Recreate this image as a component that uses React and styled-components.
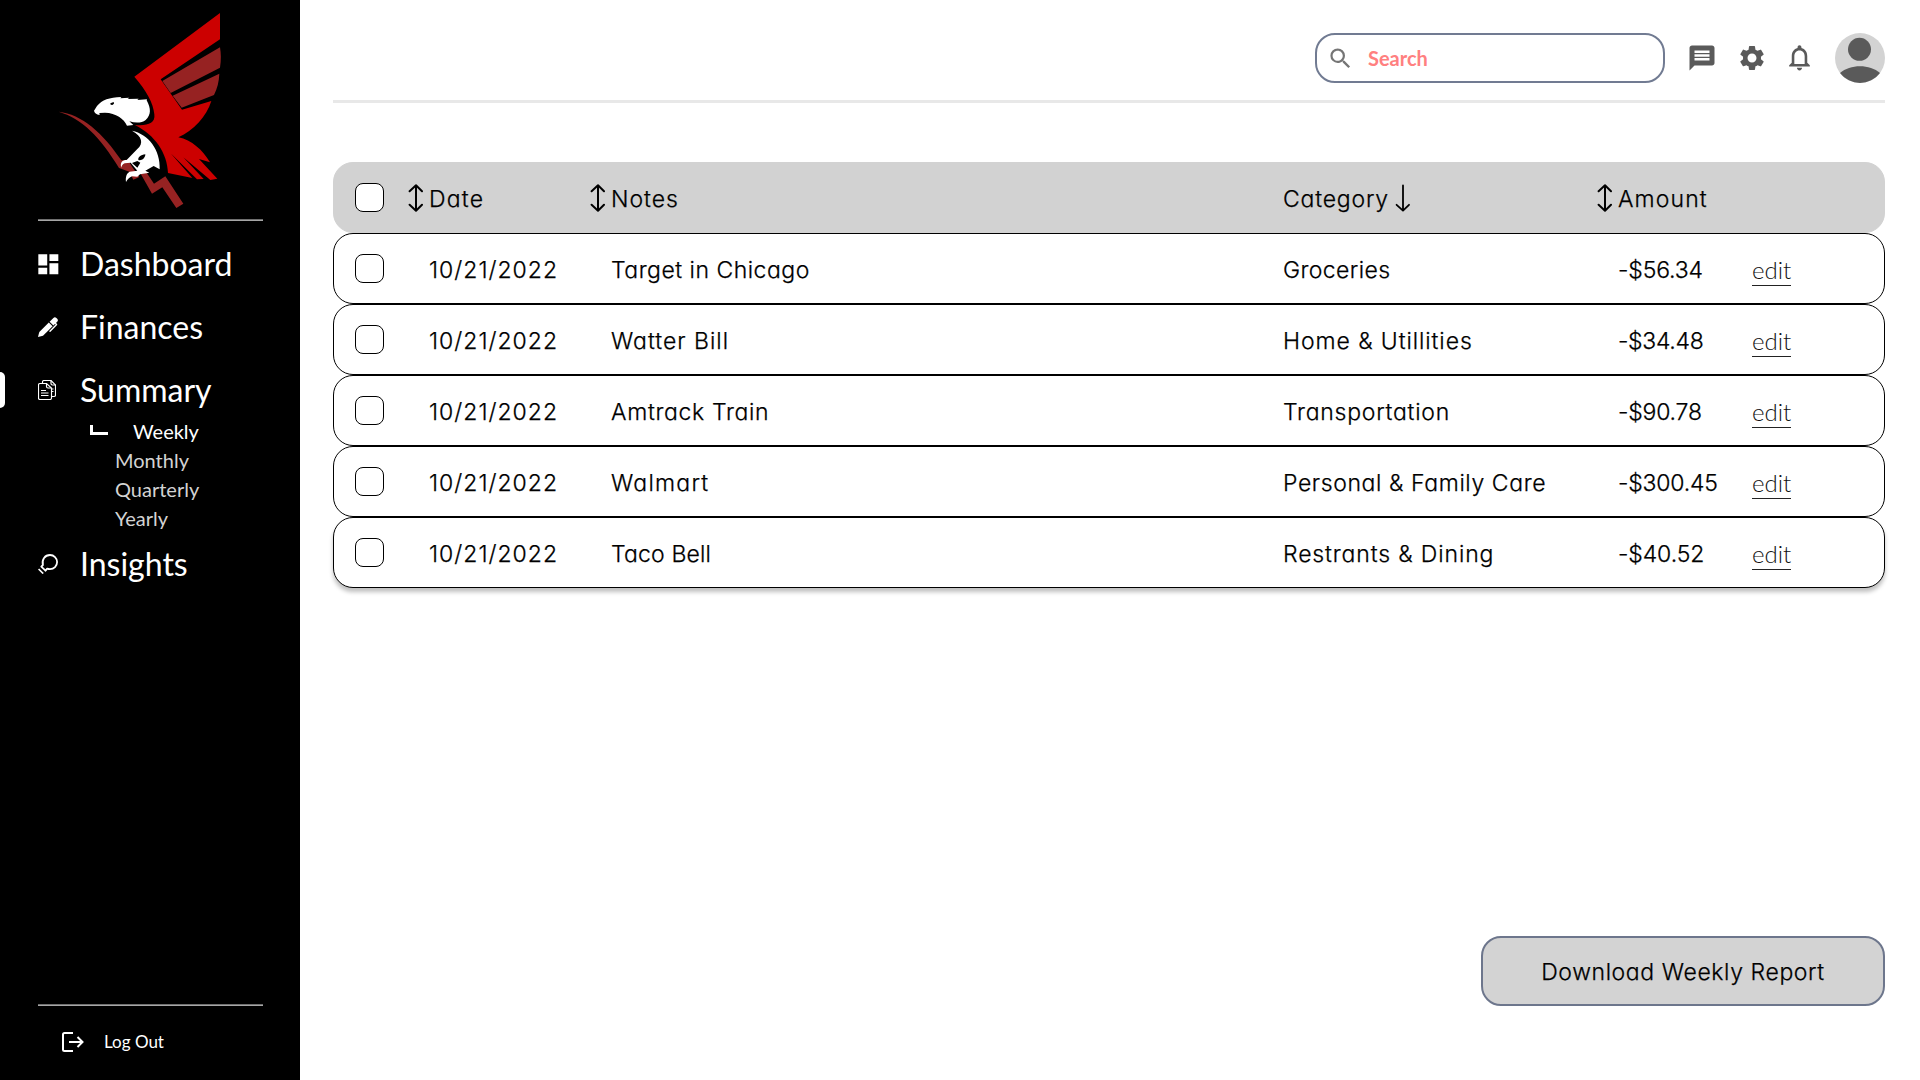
import React from 'react';
import styled, { createGlobalStyle } from 'styled-components';
import { MdDashboard, MdMessage, MdSettings, MdNotificationsNone, MdSearch } from 'react-icons/md';

const GlobalStyle = createGlobalStyle`
  *, *::before, *::after { box-sizing: border-box; }
  body { margin: 0; background: #fff; }
`;

const Page = styled.div`
  display: flex;
  width: 1920px;
  height: 1080px;
  overflow: hidden;
  background: #fff;
  font-family: Lato, "Liberation Sans", sans-serif;
`;

const Sidebar = styled.aside`
  display: flex;
  flex-direction: column;
  flex: none;
  width: 300px;
  background: #000;
  color: #fff;
`;

const Logo = styled.svg`
  display: block;
  flex: none;
  width: 190px;
  height: 219px;
  margin-left: 50px;
`;

const Rule = styled.hr`
  flex: none;
  width: 225px;
  height: 2px;
  margin: 0 0 0 38px;
  border: 0;
  border-top: 1px solid #6f6f6f;
  border-bottom: 1px solid #a6a6a6;
`;

const Nav = styled.nav`
  display: flex;
  flex-direction: column;
  padding-top: 11px;
`;

const NavItem = styled.a`
  display: flex;
  align-items: center;
  height: 63px;
  padding-left: 38px;
  font-size: 32px;
  line-height: 38px;
  position: relative;

  &::before {
    content: "";
    display: ${(p) => (p.$active ? 'block' : 'none')};
    position: absolute;
    left: 0;
    top: 14px;
    width: 5px;
    height: 36px;
    border-radius: 0 5px 5px 0;
    background: #fff;
  }
`;

const NavIcon = styled.span`
  display: flex;
  align-items: center;
  justify-content: ${(p) => (p.$start ? 'flex-start' : 'center')};
  width: 20px;
  height: 20px;
  margin-right: 22px;
  padding-top: ${(p) => p.$drop || 0}px;

  svg { flex: none; display: block; }
`;

const SubNav = styled.div`
  display: flex;
  flex-direction: column;
  margin-top: -5px;
`;

const SubItem = styled.a`
  display: flex;
  align-items: center;
  height: 29px;
  padding-left: ${(p) => (p.$active ? 90 : 115)}px;
  font-size: 20px;
  line-height: 24px;
  color: ${(p) => (p.$active ? '#fff' : '#d3d3d3')};
`;

const Elbow = styled.span`
  width: 18px;
  height: 10px;
  margin: 0 25px 2px 0;
  border-left: 3px solid #fff;
  border-bottom: 3px solid #fff;
`;

const SidebarFooter = styled.div`
  display: flex;
  flex-direction: column;
  margin-top: auto;
  height: 76px;
`;

const LogOut = styled.a`
  display: flex;
  align-items: center;
  height: 72px;
  padding-left: 62px;
  font-size: 17px;
  line-height: 20px;

  svg { display: block; margin-right: 20px; }
`;

const Main = styled.main`
  display: flex;
  flex-direction: column;
  flex: 1;
  padding: 33px 35px 74px 33px;
`;

const TopBar = styled.header`
  display: flex;
  align-items: center;
  justify-content: flex-end;
  height: 70px;
  padding-bottom: 17px;
  border-bottom: 3px solid #e8e8e8;
`;

const SearchBox = styled.label`
  display: flex;
  align-items: center;
  width: 350px;
  height: 50px;
  padding-left: 10px;
  border: 2px solid #717b92;
  border-radius: 20px;
  color: #757575;
`;

const SearchText = styled.span`
  margin: 0 0 0 14px;
  font-size: 20px;
  font-weight: 700;
  line-height: 24px;
  color: #ff8080;
`;

const Tools = styled.div`
  display: flex;
  align-items: center;
  padding-left: 22px;
  color: #5a5a5a;

  svg { display: block; flex: none; }
`;

const Tool = styled.span`
  width: ${(p) => p.$width}px;
  padding-bottom: ${(p) => p.$lift || 0}px;
`;

const Table = styled.section`
  display: flex;
  flex-direction: column;
  margin-top: 59px;
`;

const Row = styled.div`
  display: grid;
  grid-template-columns: 74px 182px 672px 335px 134px 1fr;
  align-items: center;
  height: 71px;
  padding-left: 21px;
  border: 1px solid ${(p) => (p.$head ? '#d2d2d2' : '#000')};
  border-radius: 20px;
  background: ${(p) => (p.$head ? '#d2d2d2' : '#fff')};

  &:last-child { box-shadow: 0 4px 4px rgba(0, 0, 0, 0.25); }
`;

const Checkbox = styled.span`
  width: 29px;
  height: 29px;
  border: 1px solid #000;
  border-radius: 8px;
  background: #fff;
`;

const Label = styled.span`
  padding-top: 2px;
  font-family: Inter, "Liberation Sans", sans-serif;
  font-size: 23px;
  font-weight: 300;
  line-height: 30px;
  font-feature-settings: "cv11";
  letter-spacing: ${(p) => p.$track || 0}px;
  white-space: nowrap;
  color: #000;
  -webkit-text-stroke: 0.25px #000;
`;

const HeadCell = styled.div`
  display: flex;
  align-items: center;
  gap: 6px;
  margin-left: ${(p) => (p.$lead ? -21 : 0)}px;

  svg { flex: none; display: block; }
`;

const Edit = styled.a`
  justify-self: start;
  width: 39px;
  margin-top: 3px;
  border-bottom: 1px solid #222;
  font-size: 24px;
  font-weight: 300;
  line-height: 30px;
  color: #111;
`;

const DownloadButton = styled.button`
  display: flex;
  align-items: center;
  justify-content: center;
  align-self: flex-end;
  width: 404px;
  height: 70px;
  margin-top: auto;
  padding: 0;
  border: 2px solid #6d768c;
  border-radius: 20px;
  background: #d3d3d3;
`;

const EagleLogo = () => (
  <Logo viewBox="0 0 570 657">
    <path fill="#962222" d="M26 335C95 342 160 400 214 481L234 479L246 500L268 531L250 539L238 515L207 504C150 410 95 355 26 335Z" />
    <path fill="#962222" d="M272 521L290 518L312 551L346 529L400 611L379 624L337 562L306 581Z" />
    <path fill="#cc0000" d="M510 39V118L332 238L396 329L484 303C470 350 430 392 385 412C425 420 458 450 480 487L447 477L502 536L481 540L400 472L461 537L441 538L362 460L427 534L354 519C352 460 315 405 255 375C290 378 317 372 313 343C310 310 290 272 253 230Z" />
    <path fill="#962222" d="M510 142L337 243L362 279L510 203C514 180 513 160 510 142ZM508 221L368 287L395 323L492 285C502 265 507 245 508 221Z" />
    <path fill="#fff" d="M132 332L141 318C156 300 178 292 214 291L211 295L238 293L233 297L266 296L262 300L291 298L290 301C303 325 304 345 287 360C275 369 258 370 238 364L250 375L231 377C222 356 198 339 165 338L148 339L149 345C139 343 133 338 132 332Z" />
    <path d="M181 310L191 306L192 311L187 315L182 314Z" />
    <path fill="#fff" fillRule="evenodd" d="M246 392C295 402 332 450 329 508L311 498L286 512L298 518L270 523L262 530L246 529C238 532 233 538 228 546C226 530 230 520 239 515L262 512L242 488L224 490C218 492 215 497 214 503C209 488 217 480 230 480L262 447C281 430 277 409 246 392ZM265 480C264 471 272 465 286 463C286 475 275 483 265 480ZM246 489L262 483L271 488L262 503Z" />
  </Logo>
);

const PenIcon = () => (
  <svg width="20" height="20" viewBox="0 0 20 20" fill="#fff">
    <path d="M0 20L1.300 15L10.800 5.500L14.600 9.300L5 18.700Z" />
    <path d="M11.600 4.700L15.400 .9Q16.900 -.5 18.400 1L19.200 1.800Q20.600 3.300 19.200 4.700L15.400 8.500Z" />
    <path d="M17.500 6.300L18.600 7.600L12 14.300" fill="none" stroke="#fff" strokeWidth="1.400" strokeLinecap="round" strokeLinejoin="round" />
  </svg>
);

const DocsIcon = () => (
  <svg width="18" height="20" viewBox="0 0 18 20" fill="none" stroke="#fff" strokeWidth="1.150">
    <path d="M4.500 3.500V2Q4.500 .5 6 .5H13L17.500 5V15Q17.500 16.500 16 16.500H13.500" />
    <path d="M13 .5V3.500Q13 5 14.500 5H17.500M13.500 9H15.500M13.500 11.500H15.500" />
    <path d="M.5 5Q.5 3.500 2 3.500H8.500L13.500 8V18Q13.500 19.500 12 19.500H2Q.5 19.500 .5 18Z" />
    <path d="M8.500 3.500V6.500Q8.500 8 10 8H13M3 10.500H8M3 13H10.500M3 15.500H10.500" />
  </svg>
);

const BulbIcon = () => (
  <svg width="20" height="20" viewBox="0 0 20 20" fill="none" stroke="#fff" strokeWidth="1.800">
    <path d="M4.900 11C3.500 5.500 7 1 12 1A7 7 0 0 1 12 15.200Q10.500 15.200 9.200 14.700L7.500 16.700L3.300 12.600Z" strokeLinejoin="round" />
    <path d="M.6 15L5.200 19.500" strokeWidth="1.700" />
  </svg>
);

const LogOutIcon = () => (
  <svg width="22" height="20" viewBox="0 0 22 20" fill="none" stroke="#fff" strokeWidth="2">
    <path d="M11 1H2.500Q1 1 1 2.500V17.500Q1 19 2.500 19H11" />
    <path d="M7 10H20.500M15.500 5L20.500 10L15.500 15" />
  </svg>
);

const SortIcon = () => (
  <svg width="15" height="28" viewBox="0 0 15 28" fill="none" stroke="#000" strokeWidth="2" strokeLinecap="round" strokeLinejoin="round">
    <path d="M8 1.500V26.500M1.600 7.200L8 1.300L14 7.200M1.600 20.800L8 26.700L14 20.800" />
  </svg>
);

const DownIcon = () => (
  <svg width="15" height="28" viewBox="0 0 15 28" fill="none" stroke="#000" strokeWidth="1.800" strokeLinecap="round" strokeLinejoin="round">
    <path d="M8 1.500V26.500M1.600 20.800L8 26.700L14 20.800" />
  </svg>
);

const Avatar = () => (
  <svg width="50" height="50" viewBox="0 0 50 50">
    <circle cx="25" cy="25" r="25" fill="#d3d3d3" />
    <circle cx="24.500" cy="16.300" r="11.500" fill="#5a5a5a" />
    <path fill="#5a5a5a" d="M5 40C15 31 35 31 45 40A25 25 0 0 1 5 40Z" />
  </svg>
);

const rows = [
  { notes: ['Target in Chicago', 0.5], category: ['Groceries', 0.4], amount: ['-$56.34', -0.15] },
  { notes: ['Watter Bill', 1], category: ['Home & Utillities', 0.92], amount: ['-$34.48', -0.3] },
  { notes: ['Amtrack Train', 0.67], category: ['Transportation', 0.75], amount: ['-$90.78', -0.2] },
  { notes: ['Walmart', 1.25], category: ['Personal & Family Care', 0.6], amount: ['-$300.45', -0.2] },
  { notes: ['Taco Bell', 0.15], category: ['Restrants & Dining', 0.87], amount: ['-$40.52', -0.1] },
];

const Cell = ({ value }) => <Label $track={value[1]}>{value[0]}</Label>;

export default function App() {
  return (
    <Page>
      <GlobalStyle />
      <Sidebar>
        <EagleLogo />
        <Rule />
        <Nav>
          <NavItem><NavIcon $drop={2}><MdDashboard size={26.67} /></NavIcon>Dashboard</NavItem>
          <NavItem><NavIcon><PenIcon /></NavIcon>Finances</NavItem>
          <NavItem $active><NavIcon $start><DocsIcon /></NavIcon>Summary</NavItem>
          <SubNav>
            <SubItem $active><Elbow />Weekly</SubItem>
            <SubItem>Monthly</SubItem>
            <SubItem>Quarterly</SubItem>
            <SubItem>Yearly</SubItem>
          </SubNav>
          <NavItem><NavIcon><BulbIcon /></NavIcon>Insights</NavItem>
        </Nav>
        <SidebarFooter>
          <Rule />
          <LogOut><LogOutIcon />Log Out</LogOut>
        </SidebarFooter>
      </Sidebar>
      <Main>
        <TopBar>
          <SearchBox>
            <MdSearch size={27} />
            <SearchText>Search</SearchText>
          </SearchBox>
          <Tools>
            <Tool $width={50}><MdMessage size={30} /></Tool>
            <Tool $width={47}><MdSettings size={30} /></Tool>
            <Tool $width={51} $lift={2}><MdNotificationsNone size={31} /></Tool>
            <Avatar />
          </Tools>
        </TopBar>
        <Table>
          <Row $head>
            <Checkbox />
            <HeadCell $lead><SortIcon /><Label $track={1.2}>Date</Label></HeadCell>
            <HeadCell $lead><SortIcon /><Label $track={1}>Notes</Label></HeadCell>
            <HeadCell><Label $track={0.8}>Category</Label><DownIcon /></HeadCell>
            <HeadCell $lead><SortIcon /><Label $track={1.1}>Amount</Label></HeadCell>
          </Row>
          {rows.map((row) => (
            <Row key={row.notes[0]}>
              <Checkbox />
              <Label $track={1}>10/21/2022</Label>
              <Cell value={row.notes} />
              <Cell value={row.category} />
              <Cell value={row.amount} />
              <Edit>edit</Edit>
            </Row>
          ))}
        </Table>
        <DownloadButton><Label $track={0.6}>Download Weekly Report</Label></DownloadButton>
      </Main>
    </Page>
  );
}
